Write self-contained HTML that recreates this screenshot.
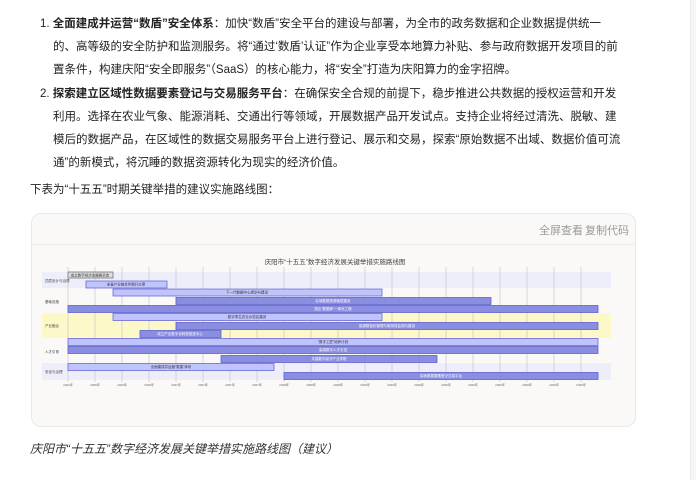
<!DOCTYPE html>
<html><head><meta charset="utf-8"><style>
body{margin:0;width:696px;height:480px;background:#fff;font-family:"Liberation Sans","Noto Sans CJK SC",sans-serif;color:#222;overflow:hidden;position:relative}
.t{position:absolute;font-size:11.5px;white-space:nowrap;line-height:23px}
b{font-weight:bold}
.card{position:absolute;left:31px;top:213px;width:605px;height:214px;background:#faf9f7;border:1px solid #ebe9e5;border-radius:10px;box-sizing:border-box}
.hd{position:absolute;left:0;top:0;right:0;height:30px;border-bottom:1px solid #eceae6}
.btn{position:absolute;top:8px;font-size:11px;color:#999}
.sb{position:absolute;left:690px;top:0;width:6px;height:480px;background:#f6f6f6;border-left:1px solid #eee}
</style></head><body>
<div class="t" style="left:40px;top:13px">1. <b>全面建成并运营“数盾”安全体系</b>：加快“数盾”安全平台的建设与部署，为全市的政务数据和企业数据提供统一</div>
<div class="t" style="left:53px;top:36px">的、高等级的安全防护和监测服务。将“通过‘数盾’认证”作为企业享受本地算力补贴、参与政府数据开发项目的前</div>
<div class="t" style="left:53px;top:59px">置条件，构建庆阳“安全即服务”（SaaS）的核心能力，将“安全”打造为庆阳算力的金字招牌。</div>
<div class="t" style="left:40px;top:83px">2. <b>探索建立区域性数据要素登记与交易服务平台</b>：在确保安全合规的前提下，稳步推进公共数据的授权运营和开发</div>
<div class="t" style="left:53px;top:106px">利用。选择在农业气象、能源消耗、交通出行等领域，开展数据产品开发试点。支持企业将经过清洗、脱敏、建</div>
<div class="t" style="left:53px;top:129px">模后的数据产品，在区域性的数据交易服务平台上进行登记、展示和交易，探索“原始数据不出域、数据价值可流</div>
<div class="t" style="left:53px;top:152px">通”的新模式，将沉睡的数据资源转化为现实的经济价值。</div>
<div class="t" style="left:30px;top:179px">下表为“十五五”时期关键举措的建议实施路线图：</div>
<div class="card"><div class="hd"><span class="btn" style="left:507px">全屏查看</span><span class="btn" style="left:553px">复制代码</span></div></div>
<svg style="position:absolute;left:0;top:0" width="696" height="480" font-family="Liberation Sans,Noto Sans CJK SC,sans-serif">
<text x="335" y="264" font-size="6.5" fill="#444" text-anchor="middle">庆阳市“十五五”数字经济发展关键举措实施路线图</text>
<rect x="42" y="272" width="569" height="16" fill="#eeeefa"/>
<rect x="42" y="313" width="569" height="25" fill="#fdf8c8"/>
<rect x="42" y="363" width="569" height="17" fill="#eeeefa"/>
<g stroke="#c8c8cc" stroke-width="0.7">
<line x1="68" y1="267" x2="68" y2="382"/><line x1="95" y1="267" x2="95" y2="382"/><line x1="122" y1="267" x2="122" y2="382"/><line x1="149" y1="267" x2="149" y2="382"/><line x1="176" y1="267" x2="176" y2="382"/><line x1="203" y1="267" x2="203" y2="382"/><line x1="230" y1="267" x2="230" y2="382"/><line x1="257" y1="267" x2="257" y2="382"/><line x1="284" y1="267" x2="284" y2="382"/><line x1="311" y1="267" x2="311" y2="382"/><line x1="338" y1="267" x2="338" y2="382"/><line x1="365" y1="267" x2="365" y2="382"/><line x1="392" y1="267" x2="392" y2="382"/><line x1="419" y1="267" x2="419" y2="382"/><line x1="446" y1="267" x2="446" y2="382"/><line x1="473" y1="267" x2="473" y2="382"/><line x1="500" y1="267" x2="500" y2="382"/><line x1="527" y1="267" x2="527" y2="382"/><line x1="554" y1="267" x2="554" y2="382"/><line x1="581" y1="267" x2="581" y2="382"/>
</g>
<g font-size="3.5" fill="#444"><text x="45" y="282">顶层设计与治理</text><text x="45" y="303">基础设施</text><text x="45" y="327">产业融合</text><text x="45" y="353">人才引育</text><text x="45" y="373">安全与治理</text></g>
<g stroke-width="0.8">
<rect x="68" y="272" width="45" height="6" fill="#ddd" stroke="#777"/>
<rect x="86" y="281" width="81" height="7" fill="#c0c4fc" stroke="#6a6ad6"/>
<rect x="113" y="289" width="269" height="7" fill="#c0c4fc" stroke="#6a6ad6"/>
<rect x="176" y="297.5" width="315" height="7" fill="#8a8ee0" stroke="#6060d0"/>
<rect x="68" y="305.5" width="530" height="7" fill="#8a8ee0" stroke="#6060d0"/>
<rect x="113" y="313.5" width="269" height="7" fill="#c0c4fc" stroke="#6a6ad6"/>
<rect x="176" y="322.5" width="422" height="7" fill="#8a8ee0" stroke="#6060d0"/>
<rect x="140" y="330.5" width="81" height="7" fill="#8a8ee0" stroke="#6060d0"/>
<rect x="68" y="338.5" width="530" height="7" fill="#c0c4fc" stroke="#6a6ad6"/>
<rect x="68" y="346.5" width="530" height="7" fill="#8a8ee0" stroke="#6060d0"/>
<rect x="221" y="355.5" width="216" height="7" fill="#8a8ee0" stroke="#6060d0"/>
<rect x="68" y="363.5" width="206" height="7" fill="#c0c4fc" stroke="#6a6ad6"/>
<rect x="284" y="372.5" width="314" height="7" fill="#8a8ee0" stroke="#6060d0"/>
</g>
<g font-size="3.5" text-anchor="middle">
<text x="90" y="276.5" fill="#333">成立数字经济发展委员会</text>
<text x="126" y="285.5" fill="#333">全省产业链合作提升方案</text>
<text x="247" y="293.5" fill="#333">下一代数据中心规划与建设</text>
<text x="333" y="302" fill="#fff">区域数据资源枢纽建设</text>
<text x="333" y="310" fill="#fff">国企“数据库”一体化工程</text>
<text x="247" y="318" fill="#333">数字孪生农业示范区建设</text>
<text x="387" y="327" fill="#fff">能源数智化管理与碳排放监测与建设</text>
<text x="180" y="335" fill="#fff">成立产业数字化转型促进中心</text>
<text x="333" y="343" fill="#333">“数字工匠”培养计划</text>
<text x="333" y="351" fill="#fff">高端数字人才引进</text>
<text x="329" y="360" fill="#fff">共建数字经济产业学院</text>
<text x="171" y="368" fill="#333">全面建成并运营“数盾”体系</text>
<text x="441" y="377" fill="#fff">探索数据要素登记交易平台</text>
</g>
<g font-size="3" fill="#666" text-anchor="middle">
<text x="68" y="386">2024年</text><text x="95" y="386">2025年</text><text x="122" y="386">2026年</text><text x="149" y="386">2026年</text><text x="176" y="386">2027年</text><text x="203" y="386">2027年</text><text x="230" y="386">2027年</text><text x="257" y="386">2027年</text><text x="284" y="386">2028年</text><text x="311" y="386">2028年</text><text x="338" y="386">2028年</text><text x="365" y="386">2029年</text><text x="392" y="386">2029年</text><text x="419" y="386">2029年</text><text x="446" y="386">2029年</text><text x="473" y="386">2029年</text><text x="500" y="386">2030年</text><text x="527" y="386">2030年</text><text x="554" y="386">2030年</text><text x="581" y="386">2030年</text>
</g>
</svg>
<div class="t" style="left:30px;top:438px;font-style:italic;color:#333;font-size:12px">庆阳市“十五五”数字经济发展关键举措实施路线图（建议）</div>
<div class="sb"></div>
</body></html>
